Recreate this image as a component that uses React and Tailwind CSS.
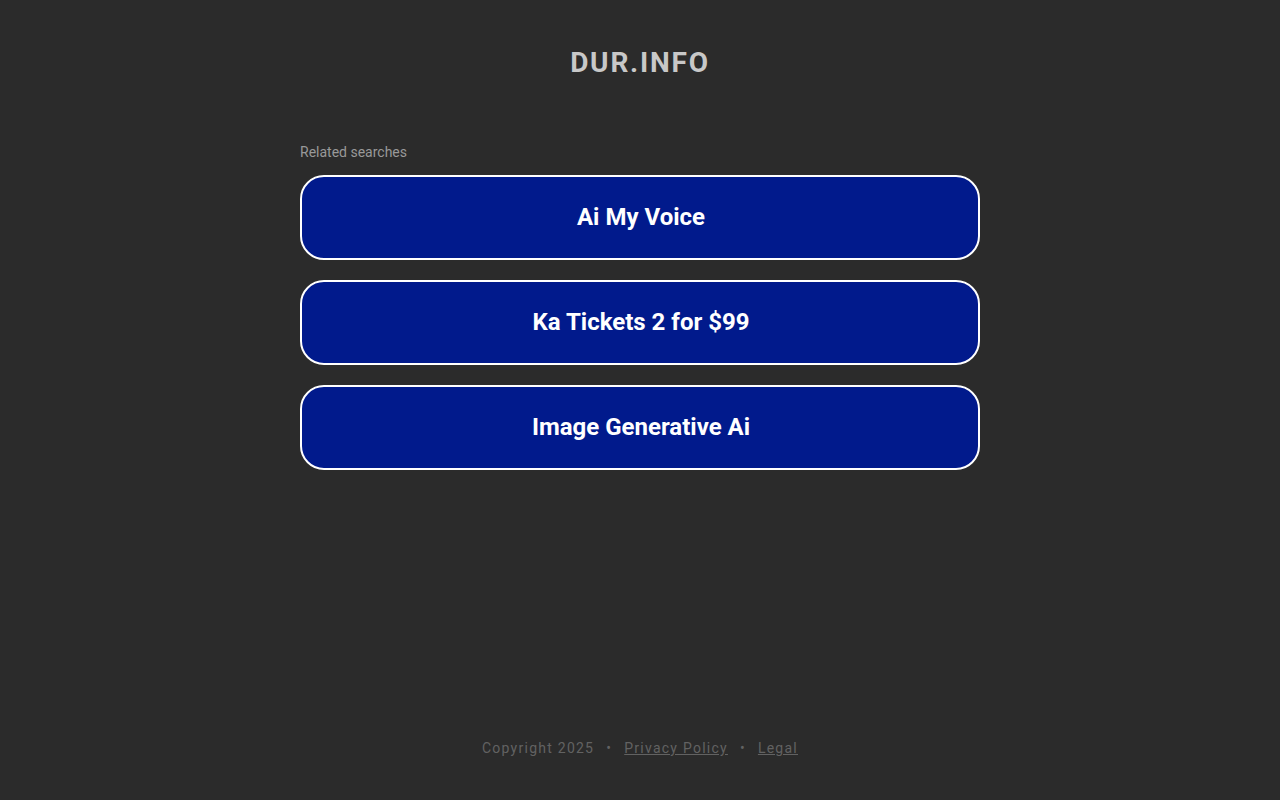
export default function App() {
  const items = ["Ai My Voice", "Ka Tickets 2 for $99", "Image Generative Ai"];
  return (
    <div className="flex h-[800px] flex-col items-center bg-[#2b2b2b] font-['Roboto',sans-serif]">
      <div className="mt-[45px] h-[36px] text-[28px] font-bold leading-[36px] tracking-[1.8px] text-[#c8c8c8]">DUR.INFO</div>
      <div className="mt-[62px] w-[680px]">
        <div className="h-[18px] text-[14px] leading-[18px] text-[#999999]">Related searches</div>
        <div className="mt-[14px] flex flex-col gap-[20px]">
          {items.map((t) => (
            <a
              key={t}
              href="#"
              className="flex h-[85px] items-center justify-center rounded-[24px] border-2 border-white bg-[#011a8c] pb-[2px] pl-[2px] text-[24px] font-bold text-white"
            >
              {t}
            </a>
          ))}
        </div>
      </div>
      <div className="mt-auto mb-[43px] flex items-center text-[14px] leading-[18px] tracking-[1.25px] text-[#626262]">
        <span>Copyright 2025</span>
        <span className="mx-[12px]">•</span>
        <a href="#" className="underline">Privacy Policy</a>
        <span className="mx-[12px]">•</span>
        <a href="#" className="underline">Legal</a>
      </div>
    </div>
  );
}
